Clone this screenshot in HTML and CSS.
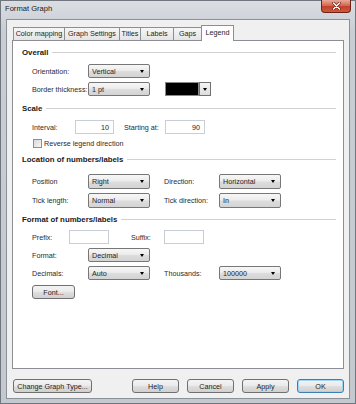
FILE: index.html
```html
<!DOCTYPE html>
<html lang="en">
<head>
	<meta charset="UTF-8">
	<title>Format Graph</title>
	<link rel="stylesheet" href="styles.css">
</head>
<body>
	<div class="window">
		<header class="titlebar">
			<span class="title">Format Graph</span>
			<span class="close">
				<svg width="9" height="8" viewBox="0 0 9 8">
					<path d="M1.5 1 L7.5 7 M7.5 1 L1.5 7" stroke="#5a1a10" stroke-width="2.6" stroke-linecap="round"/>
					<path d="M1.5 1 L7.5 7 M7.5 1 L1.5 7" stroke="#fff" stroke-width="1.5" stroke-linecap="round"/>
				</svg>
			</span>
		</header>
		<main class="client">
			<nav class="tabs">
				<span class="tab t-color">Color mapping</span>
				<span class="tab t-graph">Graph Settings</span>
				<span class="tab t-titles">Titles</span>
				<span class="tab t-labels">Labels</span>
				<span class="tab t-gaps">Gaps</span>
				<span class="tab active">Legend</span>
			</nav>
			<section class="panel">
				<!-- Overall -->
				<h3 class="group">Overall</h3>
				<div class="row r-a">
					<span class="lbl w56">Orientation:</span>
					<div class="select">Vertical</div>
				</div>
				<div class="row r-b">
					<span class="lbl w56">Border thickness:</span>
					<div class="select">1 pt</div>
					<div class="swatch">
						<span class="swatch-box"></span>
						<span class="swatch-btn"></span>
					</div>
				</div>

				<!-- Scale -->
				<h3 class="group g-scale">Scale</h3>
				<div class="row r-c">
					<span class="lbl w43">Interval:</span>
					<div class="input w39">10</div>
					<span class="lbl w41 ml10">Starting at:</span>
					<div class="input w40">90</div>
				</div>
				<div class="row r-check">
					<span class="check"></span>
					<span class="check-text">Reverse legend direction</span>
				</div>

				<!-- Location -->
				<h3 class="group g-loc">Location of numbers/labels</h3>
				<div class="row r-d">
					<span class="lbl w56">Position</span>
					<div class="select">Right</div>
					<span class="lbl w55 ml14">Direction:</span>
					<div class="select">Horizontal</div>
				</div>
				<div class="row r-e">
					<span class="lbl w56">Tick length:</span>
					<div class="select">Normal</div>
					<span class="lbl w55 ml14">Tick direction:</span>
					<div class="select">In</div>
				</div>

				<!-- Format -->
				<h3 class="group g-fmt">Format of numbers/labels</h3>
				<div class="row r-f">
					<span class="lbl w37">Prefix:</span>
					<div class="input w40"></div>
					<span class="lbl w33 ml22">Suffix:</span>
					<div class="input w40"></div>
				</div>
				<div class="row r-g">
					<span class="lbl w56">Format:</span>
					<div class="select">Decimal</div>
				</div>
				<div class="row r-g">
					<span class="lbl w56">Decimals:</span>
					<div class="select">Auto</div>
					<span class="lbl w55 ml14">Thousands:</span>
					<div class="select">100000</div>
				</div>
				<div class="row r-font">
					<span class="btn b-font">Font...</span>
				</div>
			</section>
			<footer class="buttons">
				<span class="btn b-change">Change Graph Type...</span>
				<span class="btn b-std b-help">Help</span>
				<span class="btn b-std">Cancel</span>
				<span class="btn b-std">Apply</span>
				<span class="btn b-std b-ok">OK</span>
			</footer>
		</main>
	</div>
</body>
</html>
```

FILE: styles.css
```css
* {
	box-sizing: border-box;
}
body {
	margin: 0px;
	background: #fff;
	color: #1e1e1e;
	font-family: "Liberation Sans", Arial, sans-serif;
	font-size: 7.2px;
}

/* window frame */
.window {
	width: 356px;
	height: 404px;
	border: 1px solid #70767d;
	background: linear-gradient(#dadee3, #c9ced4 30px, #c4c9cf);
	padding: 0px 5px 4px 5px;
	display: flex;
	flex-direction: column;
}
.titlebar {
	height: 18px;
	margin: 0px -5px;
	display: flex;
	align-items: flex-start;
}
.title {
	padding: 3px 0px 0px 4px;
	line-height: 10px;
	font-size: 7.6px;
	color: #1a1a1a;
}
.close {
	margin: -1px 4px 0px auto;
	width: 30px;
	height: 13px;
	border: 1px solid #6b2419;
	border-top: none;
	border-radius: 0px 0px 4px 4px;
	background: linear-gradient(#e9a898, #d46a55 45%, #c4402a 55%, #cf5a3e);
	display: flex;
	align-items: center;
	justify-content: center;
}

/* client area */
.client {
	height: 380px;
	border: 1px solid #8a9199;
	background: #f0f0f0;
	display: flex;
	flex-direction: column;
}
.tabs {
	margin: 5px 0px 0px 6px;
	height: 15px;
	display: flex;
	align-items: flex-end;
}
.tab {
	height: 13px;
	line-height: 11px;
	border: 1px solid #8c8e94;
	border-bottom: none;
	background: linear-gradient(#f6f6f6, #e4e4e4);
	text-align: center;
	margin-left: -1px;
	white-space: nowrap;
}
.tab.t-color  { width: 52px; margin-left: 0px; }
.tab.t-graph  { width: 56px; }
.tab.t-titles { width: 22px; }
.tab.t-labels { width: 34px; }
.tab.t-gaps   { width: 29px; }
.tab.active {
	width: 33px;
	height: 16px;
	line-height: 13px;
	margin-bottom: -1px;
	background: #fff;
	position: relative;
	z-index: 1;
}

.panel {
	margin-left: 5px;
	width: 332px;
	height: 329px;
	border: 1px solid #8c8e94;
	background: #fff;
	padding: 6px 7px 0px 9px;
}

/* group headings */
.group {
	margin: 0px;
	height: 10px;
	display: flex;
	align-items: center;
	font-size: 7.8px;
	font-weight: bold;
	color: #1a1a1a;
	white-space: nowrap;
}
.group::after {
	content: "";
	flex: 1;
	height: 1px;
	margin-left: 4px;
	background: #d2d2d2;
}
.group.g-scale { margin-top: 7px; }
.group.g-loc   { margin-top: 6px; }
.group.g-fmt   { margin-top: 6px; }

/* rows */
.row {
	margin-left: 10px;
	display: flex;
	align-items: center;
	height: 14px;
}
.row.r-a     { margin-top: 7px; }
.row.r-b     { margin-top: 4px; }
.row.r-c     { margin-top: 7px; }
.row.r-check { margin-top: 4px; height: 10px; }
.row.r-d     { margin-top: 10px; height: 15px; }
.row.r-e     { margin-top: 4px; height: 15px; }
.row.r-f     { margin-top: 6px; }
.row.r-g     { margin-top: 4px; }
.row.r-font  { margin-top: 5px; }

.lbl { white-space: nowrap; color: #2a2a2a; }
.w33 { width: 33px; }
.w37 { width: 37px; }
.w41 { width: 41px; }
.w43 { width: 43px; }
.w55 { width: 55px; }
.w56 { width: 56px; }
.ml10 { margin-left: 10px; }
.ml14 { margin-left: 14px; }
.ml22 { margin-left: 22px; }

/* combo boxes */
.select {
	width: 62px;
	height: 100%;
	border: 1px solid #777;
	border-radius: 2px;
	background: linear-gradient(#f7f7f7, #ececec 45%, #dcdcdc 55%, #d4d4d4);
	padding-left: 3px;
	display: flex;
	align-items: center;
	justify-content: space-between;
	white-space: nowrap;
}
.select::after {
	content: "";
	margin-right: 5px;
	border-left: 2.5px solid transparent;
	border-right: 2.5px solid transparent;
	border-top: 3px solid #000;
}

/* text boxes */
.input {
	height: 100%;
	border: 1px solid #c9ced6;
	background: #fff;
	padding-right: 4px;
	display: flex;
	align-items: center;
	justify-content: flex-end;
}
.w39 { width: 39px; }
.w40 { width: 40px; }

/* colour picker */
.swatch {
	margin-left: 15px;
	height: 100%;
	display: flex;
}
.swatch-box {
	width: 34px;
	height: 100%;
	background: #000;
	border: 1px solid #8a8a8a;
}
.swatch-btn {
	width: 12px;
	height: 100%;
	border: 1px solid #707070;
	background: linear-gradient(#f4f4f4, #dcdcdc);
	display: flex;
	align-items: center;
	justify-content: center;
}
.swatch-btn::after {
	content: "";
	border-left: 2.5px solid transparent;
	border-right: 2.5px solid transparent;
	border-top: 3px solid #000;
}

/* checkbox */
.check {
	margin-left: 1px;
	width: 9px;
	height: 9px;
	border: 1px solid #8e8f8f;
	background: linear-gradient(135deg, #d8d8d8, #f7f7f7);
}
.check-text {
	margin-left: 2px;
	color: #2a2a2a;
}

/* buttons */
.btn {
	height: 14px;
	border: 1px solid #707070;
	border-radius: 3px;
	background: linear-gradient(#f3f3f3, #ebebeb 45%, #dddddd 55%, #d0d0d0);
	display: flex;
	align-items: center;
	justify-content: center;
	white-space: nowrap;
}
.b-font { width: 43px; }

.buttons {
	margin: 10px 5px 0px 6px;
	display: flex;
	gap: 8px;
}
.b-change { width: 79px; }
.b-std { width: 47px; }
.b-help { margin-left: auto; }
.b-ok {
	border-color: #3c7fb1;
	box-shadow: inset 0px 0px 0px 1px #9fd5f5;
}
```
